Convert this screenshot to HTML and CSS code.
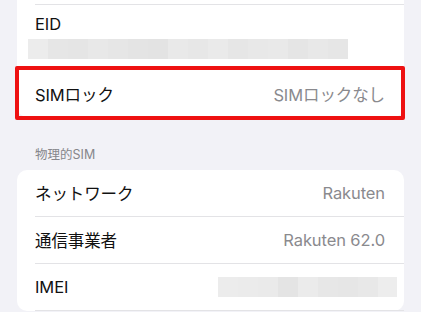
FILE: index.html
```html
<!DOCTYPE html>
<html lang="ja">
<head>
<meta charset="utf-8">
<link rel="stylesheet" href="styles.css">
</head>
<body>
<div class="card card-top">
  <div class="row partial"></div>
  <div class="row eid">
    <div class="label">EID</div>
    <div class="blur blur-eid"></div>
  </div>
  <div class="row simple highlight last">
    <span class="label">SIMロック</span>
    <span class="value">SIMロックなし</span>
  </div>
</div>

<div class="section-header">物理的SIM</div>

<div class="card">
  <div class="row simple">
    <span class="label">ネットワーク</span>
    <span class="value">Rakuten</span>
  </div>
  <div class="row simple">
    <span class="label">通信事業者</span>
    <span class="value">Rakuten 62.0</span>
  </div>
  <div class="row simple">
    <span class="label">IMEI</span>
    <span class="blur blur-imei"></span>
  </div>
</div>
</body>
</html>
```

FILE: styles.css
```css
html, body {
  margin: 0;
  padding: 0;
  background: #f2f2f7;
  font-family: "Inter", "Noto Sans CJK JP", sans-serif;
  overflow: hidden;
}

.card {
  margin: 0 17px;
  background: #ffffff;
  border-radius: 10px;
}

.card-top {
  border-radius: 0 0 10px 10px;
}

.row {
  position: relative;
  margin-left: 18px;
  padding-right: 19px;
  border-bottom: 1px solid #e3e3e6;
  box-sizing: border-box;
}

.row.last {
  border-bottom: none;
}

.row.partial {
  height: 5px;
}

.row.eid {
  height: 65px;
  padding-top: 9px;
  border-bottom: none;
}

.row.simple {
  height: 47px;
  display: flex;
  align-items: center;
  justify-content: space-between;
}

.label {
  font-size: 16.5px;
  color: #111111;
  letter-spacing: -0.1px;
}

.value {
  font-size: 16.5px;
  color: #8a8a8e;
  letter-spacing: -0.1px;
}

.blur {
  display: block;
  height: 20px;
}

.blur-eid {
  margin-left: -7px;
  margin-top: 5px;
  width: 320px;
  background: linear-gradient(to right,
    #ececec 0 20px, #e6e6e6 20px 40px, #e5e5e5 40px 60px, #e8e8e8 60px 80px,
    #e6e6e6 80px 100px, #e4e4e4 100px 120px, #e3e3e3 120px 140px, #e9e9e9 140px 160px,
    #e7e7e7 160px 180px, #eaeaea 180px 200px, #e6e6e6 200px 220px, #e8e8e8 220px 240px,
    #e9e9e9 240px 260px, #e5e5e5 260px 280px, #e8e8e8 280px 300px, #e6e6e6 300px 320px);
}

.blur-imei {
  width: 179px;
  margin-right: -12px;
  background: linear-gradient(to right,
    #ececec 0 20px, #ebebeb 20px 40px, #eaeaea 40px 60px, #e4e4e4 60px 80px,
    #ebebeb 80px 100px, #e7e7e7 100px 120px, #e6e6e6 120px 140px, #e8e8e8 140px 160px,
    #ededed 160px 179px);
}

.highlight::after {
  content: "";
  position: absolute;
  top: -4px;
  bottom: -3px;
  left: -20px;
  right: -1px;
  border: 4px solid #ee1111;
  border-radius: 2px;
  pointer-events: none;
}

.section-header {
  padding: 30px 0 0 35px;
  height: 23px;
  font-size: 12.5px;
  color: #86868b;
  line-height: 16px;
}
```
